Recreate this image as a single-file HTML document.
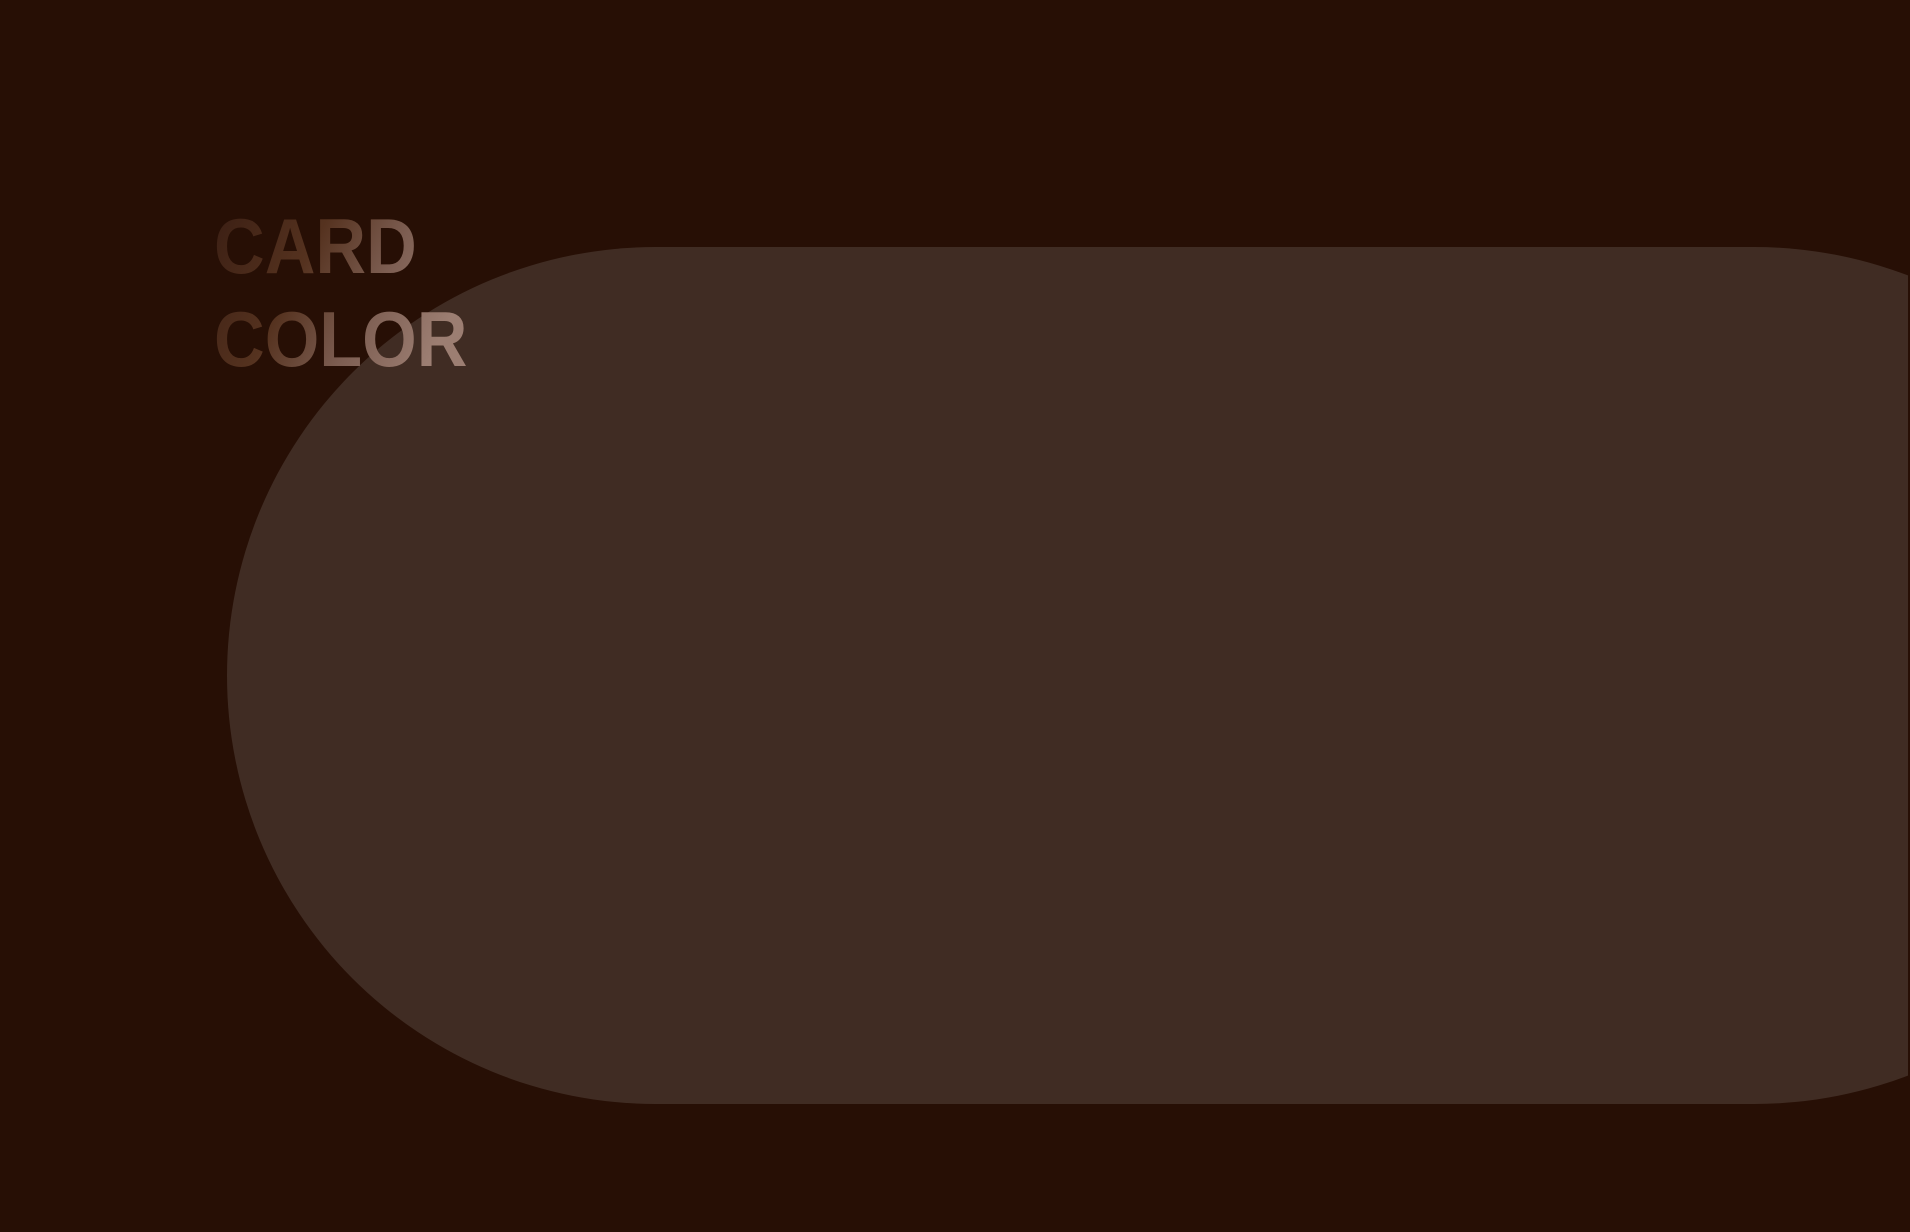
<!DOCTYPE html>
<html><head><meta charset="utf-8"><style>
html,body{margin:0;padding:0;width:1910px;height:1232px;overflow:hidden;background:#270f05;}
.card{position:absolute;left:227px;top:247px;width:1956px;height:857px;border-radius:429px/429px;background:#402c23;}
.strip{position:absolute;right:0;top:0;width:2px;height:1232px;background:#270f05;}
.t{position:absolute;left:214px;top:200px;font-family:"Liberation Sans",sans-serif;font-weight:bold;font-size:78px;line-height:93px;transform:scaleX(0.9);transform-origin:0 0;
background:linear-gradient(120deg,#3a1e13 0%,#55321f 35%,#7d5e52 60%,#9c7e72 85%);-webkit-background-clip:text;background-clip:text;color:transparent;}
</style></head><body>
<div class="card"></div>
<div class="strip"></div>
<div class="t">CARD<br>COLOR</div>
</body></html>
